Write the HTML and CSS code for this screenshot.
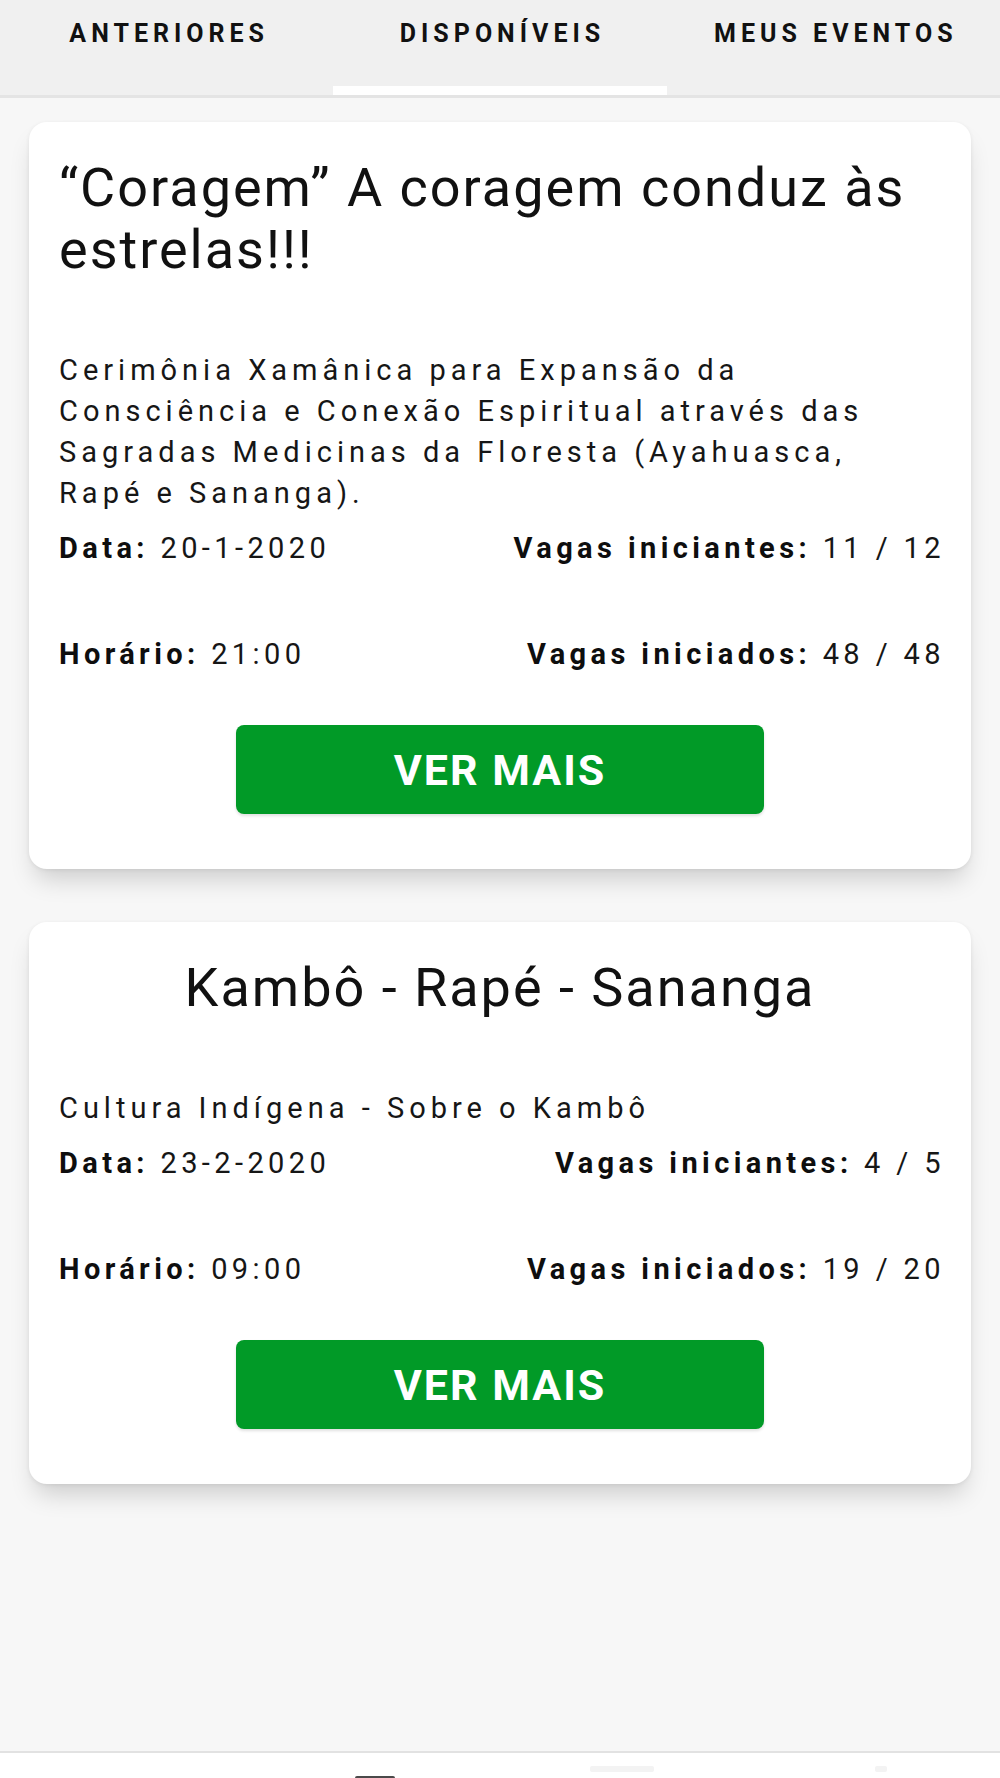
FILE: index.html
```html
<!DOCTYPE html>
<html lang="pt-BR">
<head>
<meta charset="utf-8">
<title>Eventos</title>
<link rel="stylesheet" href="styles.css">
</head>
<body>
<div class="app">
  <nav class="tabs">
    <div class="tab"><span class="tab-label">ANTERIORES</span></div>
    <div class="tab active"><span class="tab-label">DISPONÍVEIS</span><span class="indicator"></span></div>
    <div class="tab"><span class="tab-label">MEUS EVENTOS</span></div>
  </nav>

  <main class="list">
    <section class="card">
      <h2 class="title">“Coragem” A coragem conduz às estrelas!!!</h2>
      <p class="desc">Cerimônia Xamânica para Expansão da<br>Consciência e Conexão Espiritual através das<br>Sagradas Medicinas da Floresta (Ayahuasca,<br>Rapé e Sananga).</p>
      <div class="info">
        <div class="cell"><b>Data:</b> 20-1-2020</div>
        <div class="cell right"><b>Vagas iniciantes:</b> 11 / 12</div>
        <div class="cell"><b>Horário:</b> 21:00</div>
        <div class="cell right"><b>Vagas iniciados:</b> 48 / 48</div>
      </div>
      <button class="btn">VER MAIS</button>
    </section>

    <section class="card">
      <h2 class="title center">Kambô - Rapé - Sananga</h2>
      <p class="desc">Cultura Indígena - Sobre o Kambô</p>
      <div class="info">
        <div class="cell"><b>Data:</b> 23-2-2020</div>
        <div class="cell right"><b>Vagas iniciantes:</b> 4 / 5</div>
        <div class="cell"><b>Horário:</b> 09:00</div>
        <div class="cell right"><b>Vagas iniciados:</b> 19 / 20</div>
      </div>
      <button class="btn">VER MAIS</button>
    </section>
  </main>

  <footer class="sysnav">
    <span class="navicon dark"></span>
    <span class="navicon faint"></span>
    <span class="navicon faint small"></span>
  </footer>
</div>
</body>
</html>
```

FILE: styles.css
```css
* { box-sizing: border-box; }

html, body {
  margin: 0;
  padding: 0;
}

body {
  background: #f7f7f7;
  font-family: Roboto, "Noto Sans", "Liberation Sans", sans-serif;
  color: #161616;
}

.app {
  width: 1000px;
  height: 1778px;
  display: flex;
  flex-direction: column;
  overflow: hidden;
}

/* Tabs */
.tabs {
  display: grid;
  grid-template-columns: 1fr 1fr 1fr;
  height: 98px;
  background: #f0f0f0;
  border-bottom: 3px solid #e4e4e4;
  flex-shrink: 0;
}

.tab {
  display: flex;
  flex-direction: column;
  align-items: center;
  padding-top: 19px;
}

.tab-label {
  font-size: 25px;
  font-weight: 700;
  line-height: 29px;
  letter-spacing: 5px;
  padding-left: 5px;
  color: #111111;
}

.indicator {
  margin-top: auto;
  width: 100%;
  height: 9px;
  background: #ffffff;
}

/* List */
.list {
  flex: 1;
  padding: 24px 29px 0;
  display: flex;
  flex-direction: column;
  gap: 53px;
}

.card {
  background: #ffffff;
  border-radius: 18px;
  padding: 35px 30px 55px;
  display: flex;
  flex-direction: column;
  box-shadow: 0 16px 24px -6px rgba(0, 0, 0, 0.17), 0 1px 4px rgba(0, 0, 0, 0.07);
}

.title {
  margin: 0;
  font-size: 54px;
  font-weight: 400;
  line-height: 62px;
  letter-spacing: 2px;
  color: #111111;
}

.title.center {
  text-align: center;
}

.desc {
  margin: 69px 0 0;
  font-size: 29px;
  line-height: 41px;
  letter-spacing: 5px;
  white-space: nowrap;
  color: #161616;
}

.info {
  margin-top: 14px;
  display: grid;
  grid-template-columns: 1fr 1fr;
  row-gap: 65px;
  font-size: 29px;
  line-height: 41px;
  letter-spacing: 4.4px;
  color: #161616;
}

.info b {
  font-weight: 700;
  color: #0e0e0e;
}

.cell {
  white-space: nowrap;
}

.cell.right {
  text-align: right;
  margin-right: -4px;
}

.btn {
  margin: 50px auto 0;
  width: 528px;
  height: 89px;
  border: none;
  border-radius: 8px;
  background: #019a27;
  color: #ffffff;
  font-family: Roboto, "Noto Sans", "Liberation Sans", sans-serif;
  font-size: 43px;
  font-weight: 700;
  letter-spacing: 2px;
  box-shadow: 0 2px 3px rgba(0, 0, 0, 0.12);
  display: flex;
  align-items: center;
  justify-content: center;
}

/* System nav bar */
.sysnav {
  flex-shrink: 0;
  height: 27px;
  background: #ffffff;
  border-top: 2px solid #e2e2e2;
  display: flex;
  align-items: flex-start;
  padding: 23px 0 0 355px;
}

.navicon {
  display: block;
  height: 6px;
  border-radius: 2px;
}

.navicon.dark {
  width: 40px;
  background: #4a4a4a;
}

.navicon.faint {
  width: 64px;
  margin-left: 195px;
  margin-top: -10px;
  background: #f3f3f3;
}

.navicon.faint.small {
  width: 12px;
  margin-left: 221px;
}
```
